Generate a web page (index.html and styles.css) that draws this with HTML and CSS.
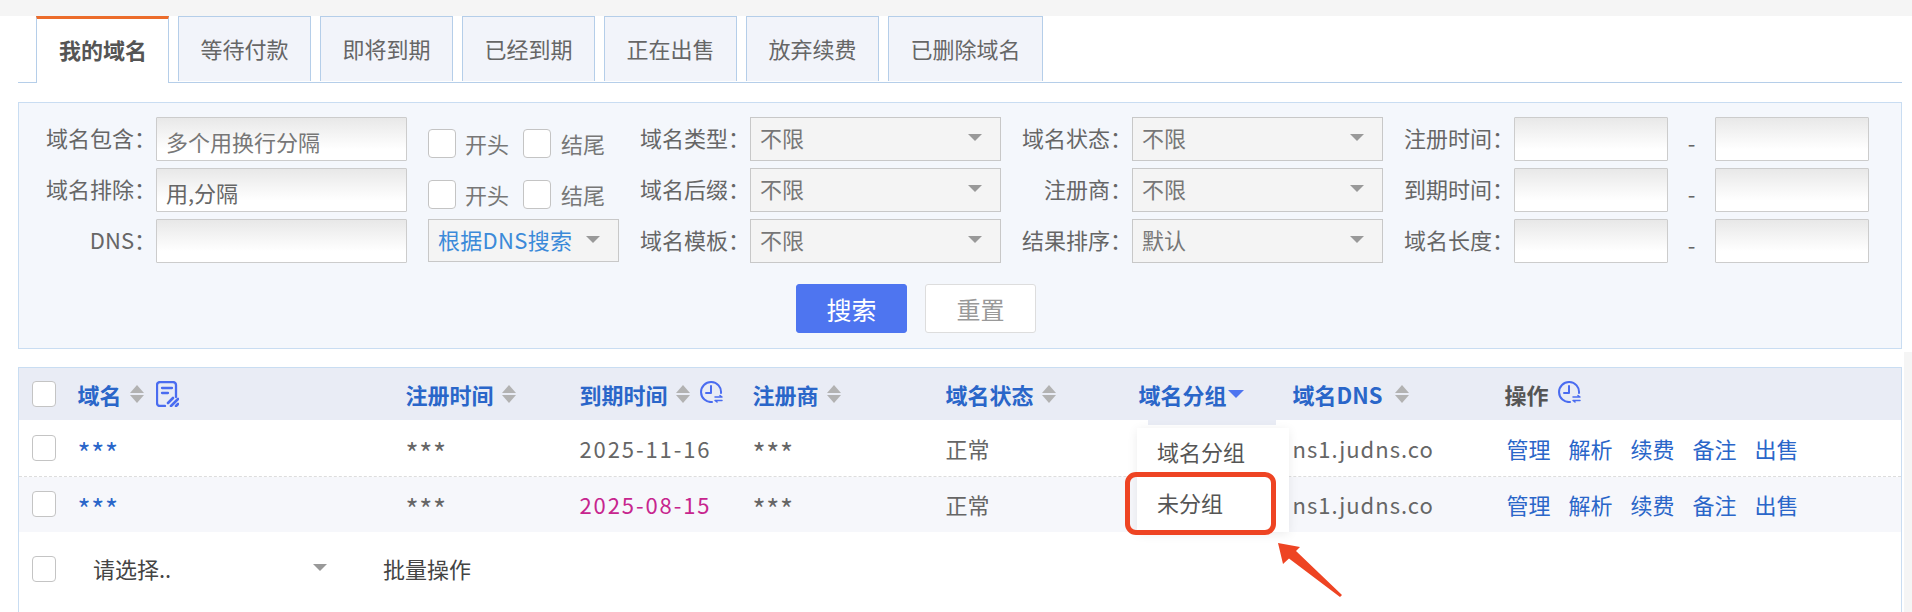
FILE: index.html
```html
<!DOCTYPE html>
<html lang="zh-CN">
<head>
	<meta charset="UTF-8">
	<title>我的域名</title>
	<link rel="stylesheet" href="styles.css">
</head>
<body>
<div class="upper">
	<div class="tabs">
		<a class="tab active">我的域名</a>
		<a class="tab">等待付款</a>
		<a class="tab">即将到期</a>
		<a class="tab">已经到期</a>
		<a class="tab">正在出售</a>
		<a class="tab">放弃续费</a>
		<a class="tab wide">已删除域名</a>
	</div>

	<div class="filter">
		<div class="filter-grid">
			<label class="lbl">域名包含：</label>
			<input class="field" placeholder="多个用换行分隔">
			<div class="checks"><span class="check"></span><span>开头</span><span class="check second"></span><span>结尾</span></div>
			<label class="lbl">域名类型：</label>
			<div class="select">不限<i class="caret"></i></div>
			<label class="lbl">域名状态：</label>
			<div class="select">不限<i class="caret"></i></div>
			<label class="lbl">注册时间：</label>
			<input class="field">
			<span class="dash">-</span>
			<input class="field">

			<label class="lbl">域名排除：</label>
			<input class="field" value="用,分隔">
			<div class="checks"><span class="check"></span><span>开头</span><span class="check second"></span><span>结尾</span></div>
			<label class="lbl">域名后缀：</label>
			<div class="select">不限<i class="caret"></i></div>
			<label class="lbl">注册商：</label>
			<div class="select">不限<i class="caret"></i></div>
			<label class="lbl">到期时间：</label>
			<input class="field">
			<span class="dash">-</span>
			<input class="field">

			<label class="lbl">DNS：</label>
			<input class="field">
			<div class="select dns">根据DNS搜索<i class="caret"></i></div>
			<label class="lbl">域名模板：</label>
			<div class="select">不限<i class="caret"></i></div>
			<label class="lbl">结果排序：</label>
			<div class="select">默认<i class="caret"></i></div>
			<label class="lbl">域名长度：</label>
			<input class="field">
			<span class="dash">-</span>
			<input class="field">
		</div>
		<div class="actions">
			<button class="btn primary">搜索</button>
			<button class="btn">重置</button>
		</div>
	</div>
</div>

<div class="lower">
	<div class="table">
		<div class="row head">
			<div class="cell"><span class="check small"></span></div>
			<div class="cell">域名<i class="sort"></i>
				<svg class="ico note" viewBox="0 0 23 26" fill="none" stroke="#4a6cf0" stroke-width="2.3" stroke-linecap="round" stroke-linejoin="round">
					<path d="M9 25H4a3 3 0 0 1-3-3V4a3 3 0 0 1 3-3h13a3 3 0 0 1 3 3v12"/>
					<path d="M6 7h10M6 12h6"/>
					<path d="M12 22l5-5M15 25l7-7M20 25l2-2" stroke-width="2.6"/>
				</svg>
			</div>
			<div class="cell">注册时间<i class="sort"></i></div>
			<div class="cell">到期时间<i class="sort"></i>
				<svg class="ico clock" viewBox="0 0 24 22" fill="none" stroke="#4a6cf0" stroke-width="2" stroke-linecap="round" stroke-linejoin="round">
					<path d="M21 12A10 10 0 1 0 12 21"/>
					<path d="M11 5v7H6"/>
					<path d="M15 16h7l-2-1.5M22 19.5h-7l2 1.5" stroke-width="1.5"/>
				</svg>
			</div>
			<div class="cell">注册商<i class="sort"></i></div>
			<div class="cell">域名状态<i class="sort"></i></div>
			<div class="cell">域名分组<i class="sort-down"></i></div>
			<div class="cell">域名DNS<i class="sort wider"></i></div>
			<div class="cell dark">操作
				<svg class="ico clock" viewBox="0 0 24 22" fill="none" stroke="#4a6cf0" stroke-width="2" stroke-linecap="round" stroke-linejoin="round">
					<path d="M21 12A10 10 0 1 0 12 21"/>
					<path d="M11 5v7H6"/>
					<path d="M15 16h7l-2-1.5M22 19.5h-7l2 1.5" stroke-width="1.5"/>
				</svg>
			</div>
		</div>

		<div class="row item first">
			<div class="cell"><span class="check small"></span></div>
			<div class="cell stars blue">***</div>
			<div class="cell stars">***</div>
			<div class="cell date">2025-11-16</div>
			<div class="cell stars">***</div>
			<div class="cell">正常</div>
			<div class="cell"></div>
			<div class="cell host">ns1.judns.co</div>
			<div class="cell ops"><a>管理</a><a>解析</a><a>续费</a><a>备注</a><a>出售</a></div>
		</div>
		<div class="row item alt">
			<div class="cell"><span class="check small"></span></div>
			<div class="cell stars blue">***</div>
			<div class="cell stars">***</div>
			<div class="cell date due">2025-08-15</div>
			<div class="cell stars">***</div>
			<div class="cell">正常</div>
			<div class="cell"></div>
			<div class="cell host">ns1.judns.co</div>
			<div class="cell ops"><a>管理</a><a>解析</a><a>续费</a><a>备注</a><a>出售</a></div>
		</div>

		<div class="batch">
			<span class="check small"></span>
			<div class="batch-select">请选择..<i class="caret"></i></div>
			<span class="batch-btn">批量操作</span>
		</div>

		<!-- dropdown opened from the group column -->
		<div class="menu-tab"></div>
		<div class="menu">
			<div class="menu-item">域名分组</div>
			<div class="menu-item">未分组</div>
		</div>
		<!-- red annotation drawn on the screenshot -->
		<div class="mark"></div>
		<svg class="mark-arrow" width="80" height="70" viewBox="0 0 80 70">
			<path d="M3 1L8 22L14 16.5L65 55L67 53L21 9L25 5Z" fill="#ee4423"/>
		</svg>
	</div>
</div>
</body>
</html>
```

FILE: styles.css
```css
* {
  box-sizing: border-box;
}

html, body {
  margin: 0;
  padding: 0;
}

body {
  height: 612px;
  overflow: hidden;
  background: #f5f5f5;
  padding-top: 16px;
  font-family: "Noto Sans CJK SC", "Noto Sans", sans-serif;
  font-size: 22px;
  color: #666;
}

.upper {
  background: #fff;
  height: 336px;
  padding: 0 10px 0 18px;
}

/* tabs */
.tabs {
  display: flex;
  gap: 9px;
  height: 67px;
  padding-left: 18px;
  border-bottom: 1px solid #b5cee9;
}

.tab {
  width: 133px;
  height: 65px;
  background: #f2f4fa;
  border: 1px solid #b5cee9;
  border-bottom: 0;
  color: #666;
  text-align: center;
  line-height: 62px;
}
.tab.wide {
  width: 155px;
}
.tab.active {
  height: 67px;
  padding-left: 1px;
  background: #fff;
  border-top: 3px solid #ec6c2b;
  color: #555;
  font-weight: bold;
  line-height: 60px;
}

/* search panel */
.filter {
  margin-top: 19px;
  height: 247px;
  padding-top: 14px;
  background: #f4f7fc;
  border: 1px solid #c9ddf2;
}

.filter-grid {
  display: grid;
  grid-template-columns: 137px 251px 212px 131px 251px 131px 251px 131px 154px 47px 154px;
  grid-auto-rows: 44px;
  row-gap: 7px;
}

.lbl {
  align-self: center;
  padding-bottom: 4px;
  text-align: right;
  white-space: nowrap;
}

.field {
  width: 100%;
  height: 44px;
  padding: 3px 9px 0;
  border: 1px solid #ccc;
  border-radius: 1px;
  outline: 0;
  background: linear-gradient(#e8e8e8, #f6f6f6 45%, #fff 75%);
  font: inherit;
  color: #666;
}
.field::placeholder {
  color: #777;
  opacity: 1;
}

.checks {
  display: flex;
  align-items: center;
  padding: 8px 0 0 21px;
  height: 44px;
  color: #777;
}

.check {
  display: block;
  width: 28px;
  height: 29px;
  margin-right: 9px;
  background: #fff;
  border: 1px solid #c4c4c4;
  border-radius: 4px;
}
.check.second {
  margin: 0 10px 0 14px;
}
.check.small {
  width: 24px;
  height: 26px;
  margin: 0;
}

.select {
  display: flex;
  align-items: center;
  position: relative;
  padding: 0 0 4px 9px;
  background: #f4f4f4;
  border: 1px solid #c8c8c8;
  color: #777;
}
.select.dns {
  width: 191px;
  height: 43px;
  margin-left: 21px;
  letter-spacing: 0.3px;
  color: #3b8ad9;
  white-space: nowrap;
}

.caret {
  position: absolute;
  right: 18px;
  top: 16px;
  border-style: solid;
  border-width: 7px 7px 0;
  border-color: #999 transparent transparent;
}
.select.dns .caret {
  right: 18px;
}

.dash {
  align-self: center;
  padding-top: 5px;
  text-align: center;
  color: #666;
}

.actions {
  display: flex;
  gap: 18px;
  margin: 21px 0 0 777px;
}

.btn {
  width: 111px;
  height: 49px;
  padding: 0;
  background: #fff;
  border: 1px solid #ddd;
  border-radius: 3px;
  font: inherit;
  font-size: 24px;
  color: #999;
}
.btn.primary {
  background: #4e75f0;
  border-color: #4e75f0;
  font-size: 25px;
  color: #fff;
}

/* table */
.lower {
  height: 260px;
  margin-right: 8px;
  padding: 15px 2px 0 18px;
  background: #fff;
}

.table {
  position: relative;
  height: 245px;
  border: 1px solid #c9ddf2;
  border-bottom: 0;
}

.row {
  display: grid;
  grid-template-columns: 58.5px 328px 174px 173px 193px 193px 154px 212px 1fr;
  align-items: center;
}
.cell {
  display: flex;
  align-items: center;
  padding: 0;
  white-space: nowrap;
}
.row .cell:first-child {
  padding-left: 13px;
}

.head {
  height: 52px;
  background: #e9ecf5;
  color: #2a66c9;
  font-weight: bold;
}
.head .dark {
  color: #555;
}

.sort {
  position: relative;
  display: block;
  width: 15px;
  height: 18px;
  margin-left: 8px;
}
.sort.wider {
  margin-left: 13px;
}
.sort::before, .sort::after {
  content: "";
  position: absolute;
  left: 0;
  border-style: solid;
  border-color: transparent;
}
.sort::before {
  top: 0;
  border-width: 0 7.5px 8.5px;
  border-bottom-color: #b2b2b2;
}
.sort::after {
  bottom: 0;
  border-width: 8.5px 7.5px 0;
  border-top-color: #b2b2b2;
}

.sort-down {
  margin: 0 0 0 1px;
  border-style: solid;
  border-width: 8px 8.5px 0;
  border-color: #4e75f0 transparent transparent;
}

.ico {
  display: block;
  margin-left: 11px;
}
.ico.note {
  width: 23px;
  height: 26px;
}
.ico.clock {
  width: 24px;
  height: 22px;
  margin: -4px 0 0 9px;
}

.item {
  height: 55px;
}
.item.first {
  height: 57px;
  border-bottom: 1px dashed #ddd;
}
.item.alt {
  background: #f6f7fb;
  padding-bottom: 2px;
}

.stars {
  padding-top: 8px;
  font-size: 28px;
  line-height: 30px;
  letter-spacing: 0.7px;
}
.blue {
  color: #2a66c9;
}
.date {
  letter-spacing: 1.9px;
}
.due {
  color: #c7258e;
}
.host {
  letter-spacing: 1px;
}

.ops {
  gap: 18px;
  padding-left: 2px;
}
.ops a {
  color: #2a66c9;
}

.batch {
  display: flex;
  align-items: center;
  height: 73px;
  padding-left: 13px;
  color: #444;
}
.batch-select {
  position: relative;
  width: 271px;
  padding: 0 0 2px 37px;
}
.batch-select .caret {
  right: 0;
  top: 12px;
  border-color: #999 transparent transparent;
}
.batch-btn {
  margin: 0 0 2px 56px;
}

/* dropdown overlay */
.menu-tab {
  position: absolute;
  left: 1129px;
  top: 52px;
  width: 128px;
  height: 5px;
  background: #e9ecf5;
}

.menu {
  position: absolute;
  left: 1118px;
  top: 60px;
  width: 152px;
  height: 104px;
  background: #fff;
  box-shadow: 0 2px 10px rgba(0,0,0,0.08);
  color: #555;
}
.menu-item {
  height: 51px;
  padding-left: 20px;
  line-height: 47px;
}

.mark {
  position: absolute;
  left: 1106px;
  top: 104px;
  width: 151px;
  height: 63px;
  border: 5px solid #ee4423;
  border-radius: 11px;
}

.mark-arrow {
  position: absolute;
  left: 1256px;
  top: 174px;
}
```
